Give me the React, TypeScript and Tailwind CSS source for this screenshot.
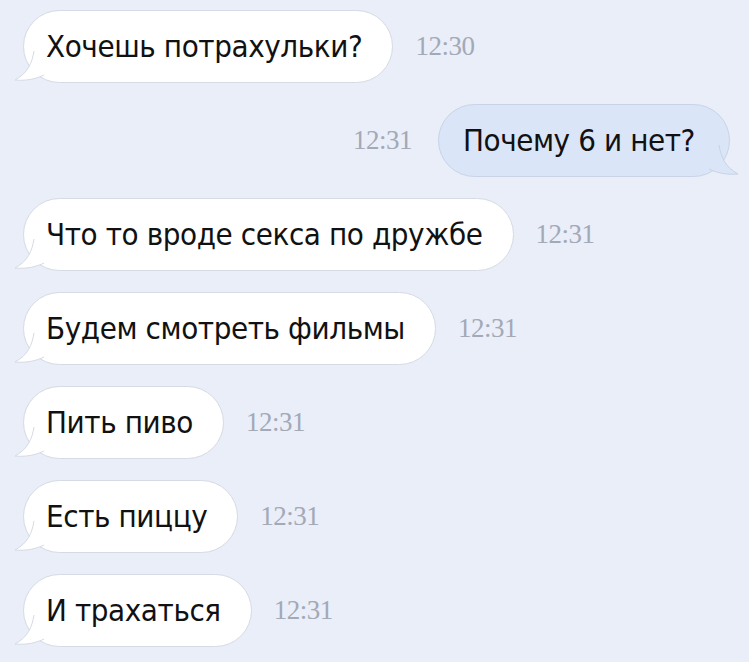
import React from 'react';

interface Msg {
  text: string;
  time: string;
  mine?: boolean;
}

const msgs: Msg[] = [
  { text: 'Хочешь потрахульки?', time: '12:30' },
  { text: 'Почему 6 и нет?', time: '12:31', mine: true },
  { text: 'Что то вроде секса по дружбе', time: '12:31' },
  { text: 'Будем смотреть фильмы', time: '12:31' },
  { text: 'Пить пиво', time: '12:31' },
  { text: 'Есть пиццу', time: '12:31' },
  { text: 'И трахаться', time: '12:31' },
];

function Tail({ mine }: { mine?: boolean }) {
  const fill = mine ? '#dae5f8' : '#ffffff';
  const stroke = mine ? '#c9d3e6' : '#d5dae4';
  return (
    <svg
      width="34"
      height="34"
      viewBox="0 0 34 34"
      className={`absolute bottom-[-1px] ${mine ? 'right-[-12px] -scale-x-100' : 'left-[-12px]'}`}
    >
      <path d="M22 2 C20 14 16 24 3 31 C14 32 24 30 32 26 L32 2 Z" fill={fill} />
      <path d="M22 2 C20 14 16 24 3 31 C14 32 24 30 32 26" fill="none" stroke={stroke} strokeWidth="1" />
    </svg>
  );
}

function Bubble({ m }: { m: Msg }) {
  return (
    <div
      className={`relative h-[73px] flex items-center rounded-full border ${
        m.mine ? 'bg-[#dae5f8] border-[#c9d3e6] pl-[24px] pr-[34px]' : 'bg-white border-[#d5dae4] pl-[22px] pr-[30px]'
      }`}
    >
      <Tail mine={m.mine} />
      <span className="relative text-[31px] leading-none text-[#111] tracking-[-0.4px] font-['DejaVu_Sans_Condensed','Liberation_Sans_Narrow',sans-serif]">
        {m.text}
      </span>
    </div>
  );
}

function Time({ t }: { t: string }) {
  return <span className="text-[27px] text-[#a3a9b6] font-['Liberation_Serif',serif] tracking-[-0.5px]">{t}</span>;
}

export default function App() {
  return (
    <div className="w-[749px] h-[662px] bg-[#e9eef9] overflow-hidden pt-[10px] flex flex-col gap-[21px]">
      {msgs.map((m, i) =>
        m.mine ? (
          <div key={i} className="flex items-center justify-end gap-[26px] pr-[19px]">
            <Time t={m.time} />
            <Bubble m={m} />
          </div>
        ) : (
          <div key={i} className="flex items-center gap-[22px] pl-[23px]">
            <Bubble m={m} />
            <Time t={m.time} />
          </div>
        ),
      )}
    </div>
  );
}
